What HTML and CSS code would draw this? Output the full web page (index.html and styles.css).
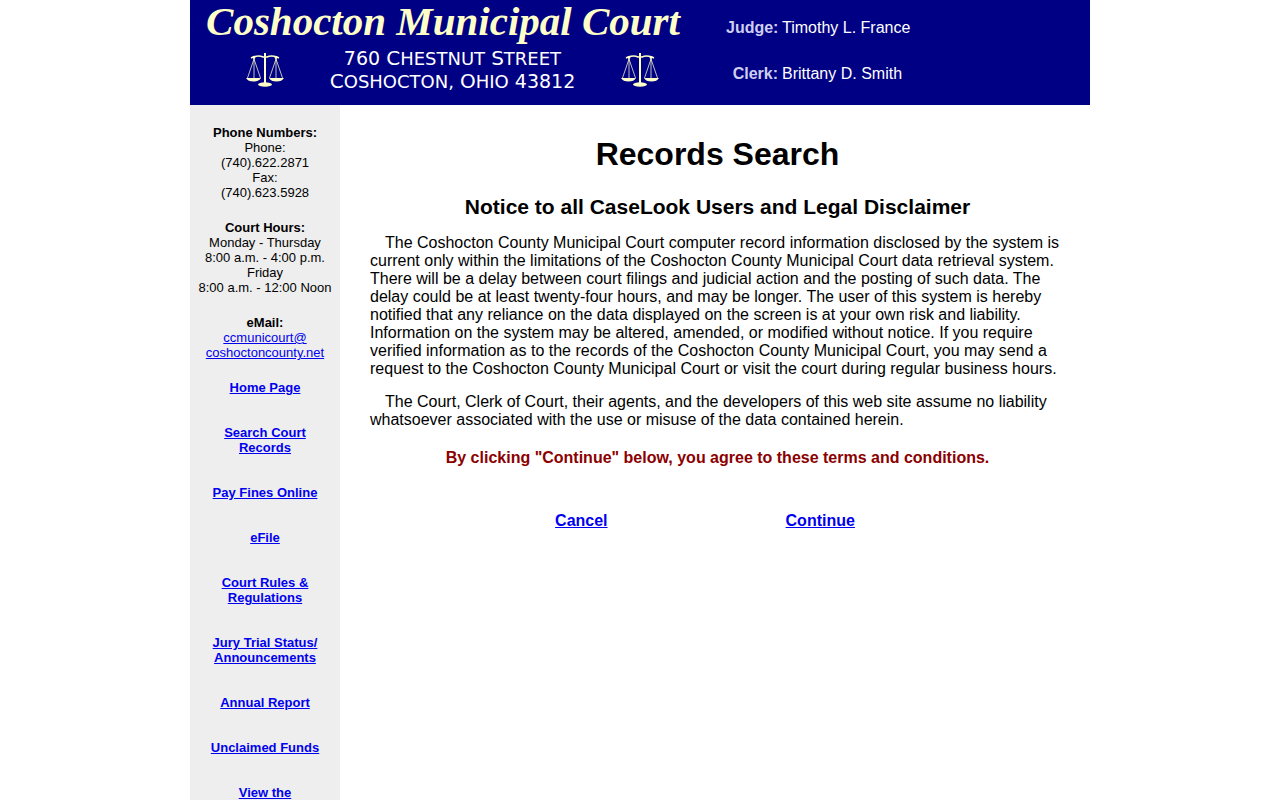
FILE: index.html
```
<!DOCTYPE html>
<html lang="en">
<head>
    <meta charset="UTF-8">
    <title>Coshocton Municipal Court - Records Search</title>
    <link rel="stylesheet" href="styles.css">
</head>
<body>
<svg class="symbols" aria-hidden="true">
    <symbol id="scales" viewBox="0 0 38 34">
        <g fill="none" stroke="#ffffc8">
            <path d="M19 0V31" stroke-width="2"/>
            <path d="M7 4Q13 2 17 4H21Q25 2 31 4M7 4L5 5M31 4L33 5" stroke-width="1.4"/>
            <path d="M8 4V25M30 4V25" stroke-width="1" opacity=".75"/>
            <path d="M8 6L1.500 25M8 6L14.500 25M30 6L23.500 25M30 6L36.500 25" stroke-width="1" opacity=".75"/>
        </g>
        <g fill="#ffffc8">
            <path d="M0 25H15Q13 28.500 7.500 28.500T0 25ZM23 25H38Q36 28.500 30.500 28.500T23 25Z"/>
            <ellipse cx="19" cy="31.500" rx="7" ry="2.200"/>
            <circle cx="8" cy="4.500" r="1.400"/>
            <circle cx="30" cy="4.500" r="1.400"/>
        </g>
    </symbol>
</svg>
<div class="page">
    <header class="banner">
        <div class="court">
            <div class="name">Coshocton Municipal Court</div>
            <div class="location">
                <svg class="scales"><use href="#scales"/></svg>
                <div class="address">760 <span>Chestnut</span> <span>Street</span><br><span>Coshocton,</span> <span>Ohio</span> 43812</div>
                <svg class="scales"><use href="#scales"/></svg>
            </div>
        </div>
        <dl class="officers">
            <dt>Judge:</dt><dd>Timothy L. France</dd>
            <dt>Clerk:</dt><dd>Brittany D. Smith</dd>
        </dl>
    </header>
    <div class="columns">
        <aside class="sidebar">
            <p><b>Phone Numbers:</b><br>Phone:<br>(740).622.2871<br>Fax:<br>(740).623.5928</p>
            <p><b>Court Hours:</b><br>Monday - Thursday<br>8:00 a.m. - 4:00 p.m.<br>Friday<br>8:00 a.m. - 12:00 Noon</p>
            <p><b>eMail:</b><br><a href="mailto:ccmunicourt@coshoctoncounty.net">ccmunicourt@<br>coshoctoncounty.net</a></p>
            <nav>
                <a href="#">Home Page</a>
                <a href="#">Search Court<br>Records</a>
                <a href="#">Pay Fines Online</a>
                <a href="#">eFile</a>
                <a href="#">Court Rules &amp;<br>Regulations</a>
                <a href="#">Jury Trial Status/<br>Announcements</a>
                <a href="#">Annual Report</a>
                <a href="#">Unclaimed Funds</a>
                <a href="#">View the</a>
            </nav>
        </aside>
        <main class="content">
            <h1>Records Search</h1>
            <h2>Notice to all CaseLook Users and Legal Disclaimer</h2>
            <p>The Coshocton County Municipal Court computer record information disclosed by the system is current only within the limitations of the Coshocton County Municipal Court data retrieval system. There will be a delay between court filings and judicial action and the posting of such data. The delay could be at least twenty-four hours, and may be longer. The user of this system is hereby notified that any reliance on the data displayed on the screen is at your own risk and liability. Information on the system may be altered, amended, or modified without notice. If you require verified information as to the records of the Coshocton County Municipal Court, you may send a request to the Coshocton County Municipal Court or visit the court during regular business hours.</p>
            <p>The Court, Clerk of Court, their agents, and the developers of this web site assume no liability whatsoever associated with the use or misuse of the data contained herein.</p>
            <div class="agree">By clicking "Continue" below, you agree to these terms and conditions.</div>
            <div class="choices">
                <a href="#">Cancel</a>
                <a href="#">Continue</a>
            </div>
        </main>
    </div>
</div>
</body>
</html>
```
FILE: styles.css
```
body {
    margin: 0;
    background: #fff;
    color: #000;
    font: 16px/18px "Liberation Sans", Arial, sans-serif;
}

a {
    color: #0000ee;
}

.symbols {
    display: none;
}

.page {
    max-width: 900px;
    min-height: 100vh;
    margin: 0 auto;
    display: flex;
    flex-direction: column;
}

.banner {
    display: flex;
    gap: 30px;
    background: #000084;
    padding-bottom: 12px;
}

.court {
    width: 506px;
    text-align: center;
}

.name {
    height: 47px;
    color: #ffffc8;
    font: italic bold 41px/42px "Liberation Serif", "Times New Roman", serif;
    white-space: nowrap;
}

.location {
    display: flex;
    justify-content: space-between;
    align-items: center;
    height: 46px;
    padding: 0 37px 0 56px;
}

.scales {
    width: 38px;
    height: 34px;
}

.address {
    color: #fff;
    font: 19px/22px "DejaVu Sans", sans-serif;
    white-space: nowrap;
}

.address span {
    display: inline-block;
    font-size: 18px;
    text-transform: uppercase;
}

.address span::first-letter {
    font-size: 20px;
}

.officers {
    display: grid;
    grid-template-columns: 52px auto;
    gap: 28px 4px;
    align-content: start;
    margin: 0;
    padding-top: 19px;
    color: #fff;
}

.officers dt {
    color: #ceceef;
    font-weight: bold;
    text-align: right;
}

.officers dd {
    margin: 0;
}

.columns {
    flex: 1;
    display: flex;
}

.sidebar {
    flex: 0 0 150px;
    box-sizing: border-box;
    padding: 20px 0;
    background: #eee;
    font-size: 13px;
    line-height: 15px;
    text-align: center;
}

.sidebar p {
    margin: 0 0 20px;
}

.sidebar nav {
    display: flex;
    flex-direction: column;
    align-items: center;
    gap: 30px;
    font-weight: bold;
}

.content {
    flex: 1;
    padding: 31px 25px 20px 30px;
}

h1, h2 {
    margin: 0;
    text-align: center;
}

h1 {
    font-size: 32px;
    line-height: 36px;
}

h2 {
    margin-top: 23px;
    font-size: 21px;
    line-height: 24px;
}

.content p {
    margin: 15px 0;
    text-indent: 15px;
}

.agree {
    margin-top: 20px;
    color: #8b0000;
    font-weight: bold;
    text-align: center;
}

.choices {
    display: flex;
    justify-content: center;
    gap: 178px;
    margin-top: 45px;
    padding-right: 25px;
    font-weight: bold;
}
```
